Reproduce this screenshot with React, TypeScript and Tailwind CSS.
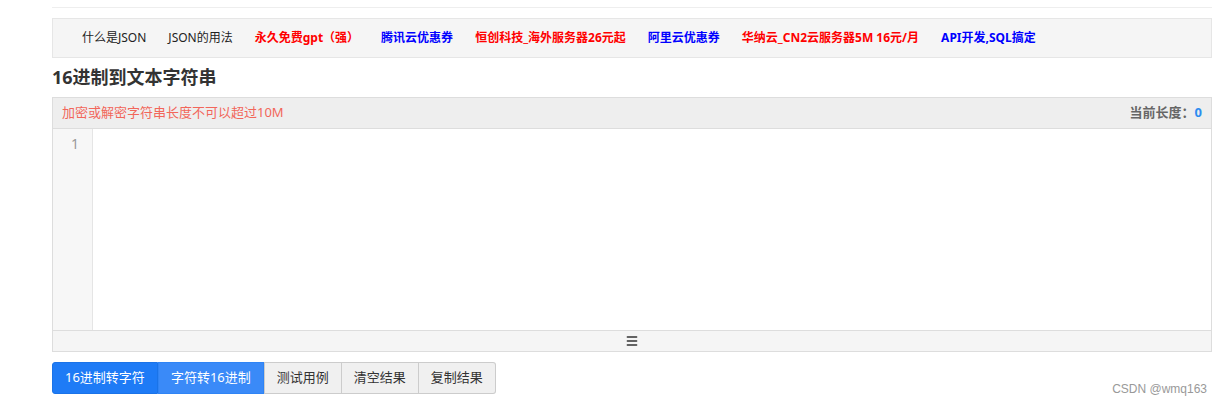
import { Menu } from 'lucide-react'

const navItems = [
  { label: '什么是JSON', tone: 'plain' },
  { label: 'JSON的用法', tone: 'plain' },
  { label: '永久免费gpt（强）', tone: 'red' },
  { label: '腾讯云优惠券', tone: 'blue' },
  { label: '恒创科技_海外服务器26元起', tone: 'red' },
  { label: '阿里云优惠券', tone: 'blue' },
  { label: '华纳云_CN2云服务器5M 16元/月', tone: 'red' },
  { label: 'API开发,SQL搞定', tone: 'blue' },
]

const toneClass: Record<string, string> = {
  plain: 'text-[#222] font-normal',
  red: 'text-[#ff0000] font-bold',
  blue: 'text-[#0000ff] font-bold',
}

export default function App() {
  return (
    <div
      className="relative h-[403px] w-[1221px] bg-white"
      style={{ fontFamily: '"Noto Sans", "Noto Sans CJK SC", sans-serif' }}
    >
      <div className="ml-[52px] w-[1160px] pt-[7px]">
        <div className="h-px bg-[#eeeeee]" />

        {/* nav links */}
        <div className="mt-[10px] flex h-[40px] items-center border border-[#e6e6e6] bg-[#f5f5f5] pl-[18px]">
          {navItems.map((item) => (
            <a key={item.label} className={`px-[11px] text-[12px] leading-none ${toneClass[item.tone]}`}>
              {item.label}
            </a>
          ))}
        </div>

        <h1 className="mt-[8px] text-[18px] font-bold leading-[22px] text-[#333]">16进制到文本字符串</h1>

        {/* editor */}
        <div className="mt-[9px] border border-[#dddddd]">
          <div className="flex h-[31px] items-center justify-between border-b border-[#dddddd] bg-[#eeeeee] px-[9px] text-[13px]">
            <span className="text-[#f2665a]">加密或解密字符串长度不可以超过10M</span>
            <span className="font-bold text-[#666]">
              当前长度：<span className="text-[#2d8cf0]">0</span>
            </span>
          </div>
          <div className="flex h-[201px]">
            <div className="w-[40px] border-r border-[#e5e5e5] bg-[#f7f7f7] pr-[13px] pt-[5px] text-right text-[14px] leading-[20px] text-[#999]">
              1
            </div>
            <div className="flex-1 bg-white" />
          </div>
          <div className="flex h-[21px] items-center justify-center border-t border-[#dddddd] bg-[#f5f5f5]">
            <Menu className="h-[14px] w-[14px] text-[#333]" strokeWidth={2.5} />
          </div>
        </div>

        {/* buttons */}
        <div className="mt-[10px] flex text-[13px]">
          <button className="h-[32px] rounded-l-[3px] border border-[#1a73e8] bg-[#1e7bf6] px-[12px] text-white">
            16进制转字符
          </button>
          <button className="h-[32px] border border-[#2f84f5] bg-[#3a8af8] px-[12px] text-white">
            字符转16进制
          </button>
          <button className="h-[32px] border border-[#cccccc] bg-[#f0f0f0] px-[12px] text-[#333]">
            测试用例
          </button>
          <button className="h-[32px] border border-l-0 border-[#cccccc] bg-[#f0f0f0] px-[12px] text-[#333]">
            清空结果
          </button>
          <button className="h-[32px] rounded-r-[3px] border border-l-0 border-[#cccccc] bg-[#f0f0f0] px-[12px] text-[#333]">
            复制结果
          </button>
        </div>
      </div>

      <span
        className="absolute right-[14px] top-[380px] text-[12px] text-[#999]"
        style={{ fontFamily: '"Liberation Sans", Arial, sans-serif' }}
      >
        CSDN @wmq163
      </span>
    </div>
  )
}
